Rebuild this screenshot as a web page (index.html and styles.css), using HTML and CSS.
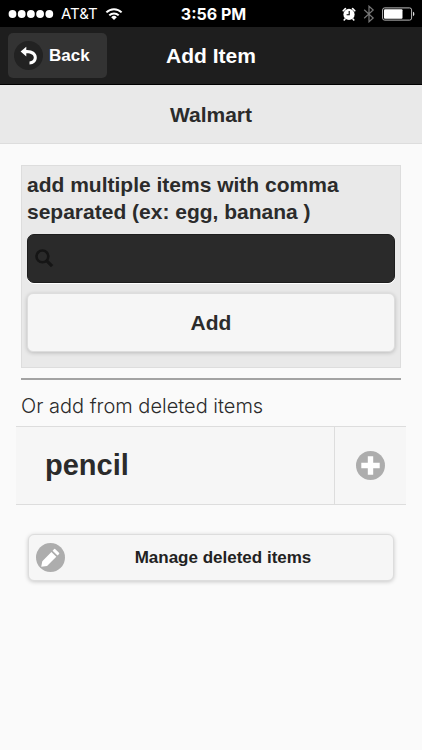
FILE: index.html
```html
<!DOCTYPE html>
<html lang="en">
<head>
<meta charset="utf-8">
<meta name="viewport" content="width=device-width, initial-scale=1">
<title>Add Item</title>
<link rel="stylesheet" href="styles.css">
</head>
<body>
<div class="status">
  <div class="status-left">
    <svg width="46" height="10" viewBox="0 0 46 10" fill="#fff" aria-hidden="true"><circle cx="4.5" cy="5" r="3.9"/><circle cx="13.7" cy="5" r="3.9"/><circle cx="22.9" cy="5" r="3.9"/><circle cx="32.1" cy="5" r="3.9"/><circle cx="41.3" cy="5" r="3.9"/></svg>
    <span class="carrier">AT&amp;T</span>
    <svg width="18" height="14" viewBox="0 0 18 14" fill="none" stroke="#fff" stroke-width="2" aria-hidden="true"><path d="M1.4 5.4a10.6 10.6 0 0 1 15.2 0M4.3 8.4a6.6 6.6 0 0 1 9.4 0"/><path d="M9 13 6.2 10.2a4 4 0 0 1 5.6 0z" fill="#fff" stroke="none"/></svg>
  </div>
  <span class="time">3:56 PM</span>
  <div class="status-right">
    <svg width="14" height="14" viewBox="0 0 14 14" aria-hidden="true"><circle cx="7" cy="7.4" r="5.6" fill="#fff"/><path d="M1.2 3.8 3.4 1.6M12.8 3.8l-2.2-2.2M3 12l-.8 1M11 12l.8 1" stroke="#fff" stroke-width="1.6" stroke-linecap="round"/><path d="M7.2 4v3.7H4.6" stroke="#000" stroke-width="1.1" fill="none"/></svg>
    <svg width="12" height="18" viewBox="0 0 12 18" fill="none" stroke="#777" stroke-width="1.2" aria-hidden="true"><path d="m1.2 4.8 9 8.2L6 16.8V1.2L10.2 5l-9 8.2"/></svg>
    <svg width="33" height="14" viewBox="0 0 33 14" aria-hidden="true"><rect x=".6" y=".9" width="29" height="12.2" rx="2" fill="none" stroke="#bbb"/><rect x="2" y="2.2" width="18.5" height="9.6" rx="1" fill="#fff"/><path d="M31 4.8c1.8.5 1.8 3.9 0 4.4z" fill="#ddd"/></svg>
  </div>
</div>
<header class="header">
  <button class="back" type="button">
    <svg width="29" height="29" viewBox="0 0 29 29" aria-hidden="true"><circle cx="14.5" cy="14.5" r="14.5" fill="#222"/><path d="M12.3 5.8v3.2c6.4-.2 10.500 2.9 10.500 7.400 0 4.200-3 6.800-7.300 7v-2.800c2.700-.2 4.300-1.700 4.300-4 0-2.900-2.700-4.500-7.500-4.400v3.200L6.600 10.600z" fill="#fff"/></svg>
    <span>Back</span>
  </button>
  <h1 class="title">Add Item</h1>
</header>
<h2 class="store">Walmart</h2>
<main class="content">
  <form class="panel">
    <label class="prompt" for="items">add multiple items with comma separated (ex: egg, banana )</label>
    <div class="field">
      <svg width="19" height="19" viewBox="0 0 19 19" fill="none" stroke="#151515" aria-hidden="true"><circle cx="7.4" cy="7.4" r="5.9" stroke-width="2.6"/><path d="m11.8 11.8 5.3 5.3" stroke-width="3.2"/></svg>
      <input id="items" class="input" type="text">
    </div>
    <button class="button add" type="button">Add</button>
  </form>
  <hr class="rule">
  <p class="hint">Or add from deleted items</p>
  <ul class="list">
    <li class="item">
      <button class="name" type="button">pencil</button>
      <button class="plus" type="button" aria-label="Add pencil">
        <svg width="29" height="29" viewBox="0 0 29 29" aria-hidden="true"><circle cx="14.5" cy="14.5" r="14.5" fill="#adadad"/><path d="M11.8 5.3h5.4v6.5h6.5v5.4h-6.5v6.5h-5.4v-6.5H5.3v-5.4h6.500z" fill="#fff"/></svg>
      </button>
    </li>
  </ul>
  <button class="button manage" type="button">
    <svg width="29" height="29" viewBox="0 0 29 29" aria-hidden="true"><circle cx="14.5" cy="14.5" r="14.5" fill="#adadad"/><path d="M5.2 23.8 6.300 18.200 15.400 8.900l4.900 4.900-9.300 9.100zM16.600 7.700l1.600-1.600q.6-.5 1.200.1l3.600 3.600q.6.600.1 1.200l-1.600 1.600z" fill="#fff"/></svg>
    <span class="manage-label">Manage deleted items</span>
  </button>
</main>
</body>
</html>
```
FILE: styles.css
```css
* {
  box-sizing: border-box;
}

body {
  margin: 0;
  background: #fafafa;
  color: #2b2b2b;
  font-family: "Liberation Sans", Arial, sans-serif;
}

button {
  font: inherit;
  font-weight: 700;
  color: inherit;
  cursor: pointer;
}

svg {
  display: block;
  flex: none;
}

.status {
  display: grid;
  grid-template-columns: 1fr auto 1fr;
  align-items: center;
  height: 27px;
  padding: 0 7px 0 8px;
  background: #000;
  color: #fff;
  font-family: Inter, "Liberation Sans", sans-serif;
  font-size: 16px;
}

.status-left,
.status-right {
  display: flex;
  align-items: center;
  gap: 7px;
}

.status-right {
  justify-content: flex-end;
}

.carrier {
  font-size: 15px;
}

.time {
  padding-left: 4px;
  font-weight: 700;
}

.header {
  display: grid;
  grid-template-columns: 1fr auto 1fr;
  align-items: center;
  height: 58px;
  padding: 0 8px;
  background: #1e1e1e;
  border-bottom: 1px solid #000;
  color: #fff;
}

.back {
  justify-self: start;
  display: flex;
  align-items: center;
  gap: 6px;
  height: 45px;
  padding: 0 17px 0 6px;
  border: 0;
  border-radius: 5px;
  background: #333;
  color: #fff;
  font-size: 17px;
}

.title,
.store {
  margin: 0;
  font-size: 21px;
  line-height: 28px;
  text-align: center;
}

.store {
  padding: 16px 0 14px;
  background: #e9e9e9;
  border-bottom: 1px solid #ddd;
}

.content {
  padding: 21px 16px;
}

.panel {
  margin: 0 5px;
  padding: 5px 5px 15px;
  background: #e9e9e9;
  border: 1px solid #ddd;
}

.prompt {
  display: block;
  font-size: 21px;
  font-weight: 700;
  line-height: 27px;
}

.field {
  display: flex;
  align-items: center;
  height: 49px;
  margin: 9px 0 10px;
  padding-left: 7px;
  background: #2a2a2a;
  border: 1px solid #1d1d1d;
  border-radius: 7px;
  box-shadow: 0 1px 0 #fff;
}

.input {
  flex: 1;
  min-width: 0;
  height: 100%;
  padding: 0 8px;
  border: 0;
  outline: 0;
  background: transparent;
  color: #fff;
  font: inherit;
  font-size: 20px;
}

.button {
  display: flex;
  align-items: center;
  justify-content: center;
  background: #f6f6f6;
  border: 1px solid #ddd;
  border-radius: 6px;
  box-shadow: 0 1px 4px rgba(0, 0, 0, 0.2);
}

.add {
  width: 100%;
  height: 59px;
  font-size: 21px;
}

.rule {
  height: 2px;
  margin: 10px 5px 0;
  border: 0;
  background: #a3a3a3;
}

.hint {
  margin: 12px 5px 6px;
  font-family: Inter, "Liberation Sans", sans-serif;
  font-size: 20px;
  font-weight: 300;
  line-height: 28px;
}

.list {
  margin: 0;
  padding: 0;
  list-style: none;
}

.item {
  display: flex;
  height: 79px;
  background: #f6f6f6;
  border: solid #ddd;
  border-width: 1px 0;
}

.name {
  flex: 1;
  padding: 0 29px;
  border: 0;
  background: none;
  font-size: 29px;
  text-align: left;
}

.plus {
  display: flex;
  align-items: center;
  justify-content: center;
  width: 72px;
  padding: 0;
  border: 0;
  border-left: 1px solid #ddd;
  background: none;
}

.manage {
  width: calc(100% - 24px);
  height: 47px;
  margin: 29px 12px 0;
  padding: 0 12px 0 7px;
  color: #222;
  font-size: 17px;
}

.manage-label {
  flex: 1;
  text-align: center;
}
```
